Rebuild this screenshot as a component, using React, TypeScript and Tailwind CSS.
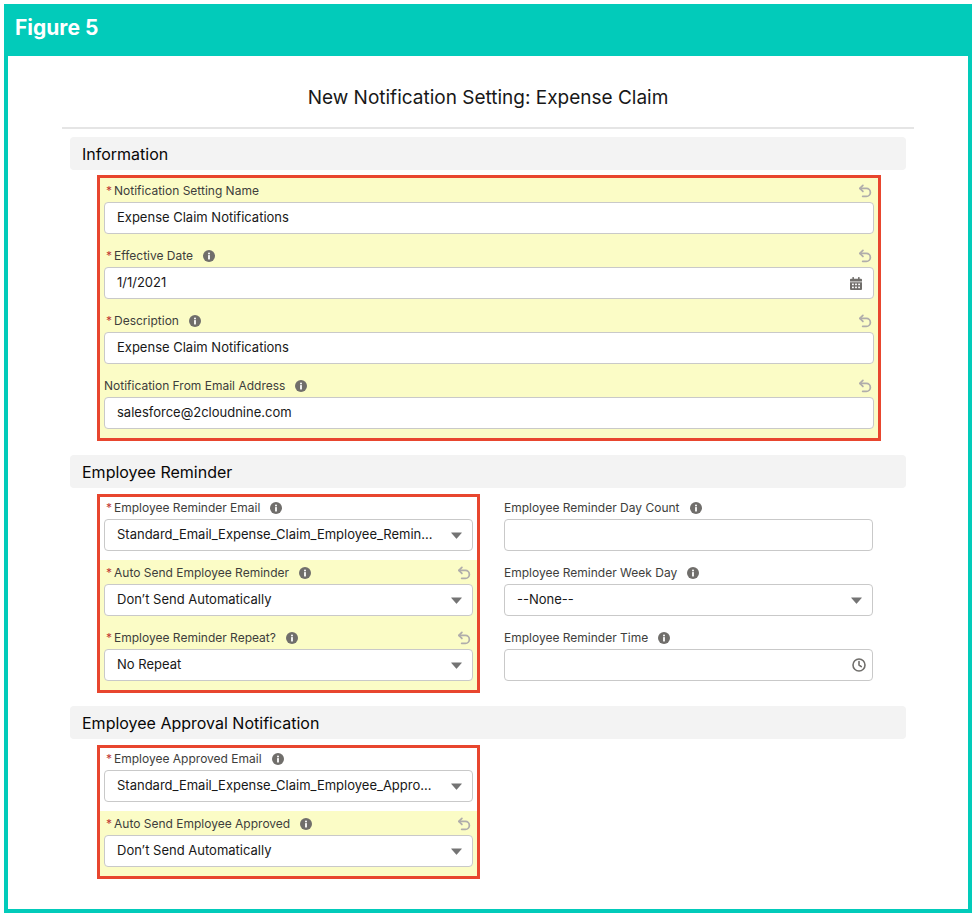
import React from 'react';

type Kind = 'text' | 'date' | 'select' | 'time';

const InfoIcon = () => (
  <svg width="12" height="12" viewBox="0 0 12 12" className="ml-[10px] shrink-0">
    <circle cx="6" cy="6" r="6" fill="#706e6b" />
    <circle cx="6" cy="3.4" r="1" fill="#fff" />
    <rect x="5.1" y="5" width="1.8" height="4.4" rx="0.5" fill="#fff" />
  </svg>
);

const UndoIcon = () => (
  <svg width="14" height="14" viewBox="0 0 12 12" className="ml-auto mr-[2px] shrink-0" fill="none" stroke="#b0adab" strokeWidth="1.5" strokeLinecap="round" strokeLinejoin="round">
    <path d="M4.2 1.2 1.6 3.8l2.6 2.6" />
    <path d="M1.8 3.8h5.4a3.4 3.4 0 0 1 0 6.8H4" />
  </svg>
);

const Caret = () => (
  <svg width="11" height="7" viewBox="0 0 11 7" className="shrink-0">
    <path d="M0.6 0.4h9.8a.4.4 0 0 1 .3.7L5.8 6.5a.4.4 0 0 1-.6 0L.3 1.1a.4.4 0 0 1 .3-.7z" fill="#747474" />
  </svg>
);

const CalendarIcon = () => (
  <svg width="12" height="13" viewBox="0 0 12 13" className="shrink-0" fill="#706e6b">
    <rect x="2.4" y="0" width="1.6" height="3" rx="0.6" />
    <rect x="8" y="0" width="1.6" height="3" rx="0.6" />
    <path d="M1 1.8h10a1 1 0 0 1 1 1v1.6H0V2.8a1 1 0 0 1 1-1z" />
    <path d="M0 5.3h12V12a1 1 0 0 1-1 1H1a1 1 0 0 1-1-1z" />
    <g fill="#fff">
      <rect x="2" y="6.6" width="1.8" height="1.6" />
      <rect x="5.1" y="6.6" width="1.8" height="1.6" />
      <rect x="8.2" y="6.6" width="1.8" height="1.6" />
      <rect x="2" y="9.6" width="1.8" height="1.6" />
      <rect x="5.1" y="9.6" width="1.8" height="1.6" />
      <rect x="8.2" y="9.6" width="1.8" height="1.6" />
    </g>
  </svg>
);

const ClockIcon = () => (
  <svg width="14" height="14" viewBox="0 0 14 14" className="shrink-0" fill="none" stroke="#706e6b" strokeWidth="1.6" strokeLinecap="round" strokeLinejoin="round">
    <circle cx="7" cy="7" r="6" />
    <path d="M7 3.6V7l2.3 1.6" />
  </svg>
);

type FieldProps = {
  label: string;
  value?: string;
  kind?: Kind;
  required?: boolean;
  info?: boolean;
  edited?: boolean;
  className?: string;
};

const Field: React.FC<FieldProps> = ({ label, value = '', kind = 'text', required, info, edited, className = '' }) => {
  return (
    <div className={`px-[4px] ${edited ? 'bg-[#fbfcc6] pt-[2px] pb-[9px]' : ''} ${className}`}>
      <div className="flex h-[22px] items-center text-[12px] text-[#3e3e3c]">
        {required && <span className="ml-[2px] mr-[2px] text-[#c23934]">*</span>}
        <span>{label}</span>
        {info && <InfoIcon />}
        {edited && <UndoIcon />}
      </div>
      <div
        className={`flex h-[32px] items-center rounded-[4px] border border-[#c9c9c9] bg-white pl-[12px] text-[13px] text-[#181818] ${
          kind === 'select' ? 'pr-[10px]' : kind === 'time' ? 'pr-[6px]' : 'pr-[11px]'
        }`}
      >
        <span className="flex-1 overflow-hidden whitespace-nowrap">{value}</span>
        {kind === 'select' && <Caret />}
        {kind === 'date' && <CalendarIcon />}
        {kind === 'time' && <ClockIcon />}
      </div>
    </div>
  );
};

const SectionHeader = ({ title }: { title: string }) => (
  <div className="mx-[8px] flex h-[33px] items-center rounded-[4px] bg-[#f3f3f3] pl-[12px] text-[16px] text-[#080707]">{title}</div>
);

const App: React.FC = () => {
  return (
    <div className="h-[916px] w-[976px] bg-white pl-[4px] pt-[4px]" style={{ fontFamily: 'Inter, "Liberation Sans", Arial, sans-serif' }}>
      <div className="flex h-[909px] w-[968px] flex-col bg-[#02cbba] px-[4px] pb-[4px]">
        <div className="flex h-[52px] items-center pb-[4px] pl-[7px] text-[21px] font-bold text-white">Figure 5</div>

        <div className="flex-1 bg-white pt-[30px]">
          <h1 className="text-center text-[19px] leading-[24px] text-[#181818]">New Notification Setting: Expense Claim</h1>

          <div className="mx-[54px] mt-[17px]">
            <div className="h-[2px] bg-[#e5e5e5]" />

            <div className="mt-[8px]">
              <SectionHeader title="Information" />
              <div className="mt-[5px] pl-[35px] pr-[33px]">
                <div className="border-[3px] border-[#e8462e]">
                  <Field label="Notification Setting Name" value="Expense Claim Notifications" required edited />
                  <Field label="Effective Date" value="1/1/2021" kind="date" required info edited />
                  <Field label="Description" value="Expense Claim Notifications" required info edited />
                  <Field label="Notification From Email Address" value="salesforce@2cloudnine.com" info edited />
                </div>
              </div>
            </div>

            <div className="mt-[14px]">
              <SectionHeader title="Employee Reminder" />
              <div className="mt-[6px] grid grid-cols-[383px_1fr] gap-[20px] pl-[35px] pr-[33px]">
                <div className="border-[3px] border-[#e8462e]">
                  <Field label="Employee Reminder Email" value="Standard_Email_Expense_Claim_Employee_Remin..." kind="select" required info className="pb-[9px]" />
                  <Field label="Auto Send Employee Reminder" value="Don’t Send Automatically" kind="select" required info edited />
                  <Field label="Employee Reminder Repeat?" value="No Repeat" kind="select" required info edited />
                </div>
                <div className="pr-[4px] pt-[3px]">
                  <Field label="Employee Reminder Day Count" info className="pb-[11px]" />
                  <Field label="Employee Reminder Week Day" value="--None--" kind="select" info className="pb-[11px]" />
                  <Field label="Employee Reminder Time" kind="time" info className="pb-[11px]" />
                </div>
              </div>
            </div>

            <div className="mt-[13px]">
              <SectionHeader title="Employee Approval Notification" />
              <div className="mt-[6px] grid grid-cols-[383px_1fr] gap-[20px] pl-[35px] pr-[33px]">
                <div className="border-[3px] border-[#e8462e]">
                  <Field label="Employee Approved Email" value="Standard_Email_Expense_Claim_Employee_Appro..." kind="select" required info className="pb-[9px]" />
                  <Field label="Auto Send Employee Approved" value="Don’t Send Automatically" kind="select" required info edited />
                </div>
                <div />
              </div>
            </div>
          </div>
        </div>
      </div>
    </div>
  );
};

export default App;
